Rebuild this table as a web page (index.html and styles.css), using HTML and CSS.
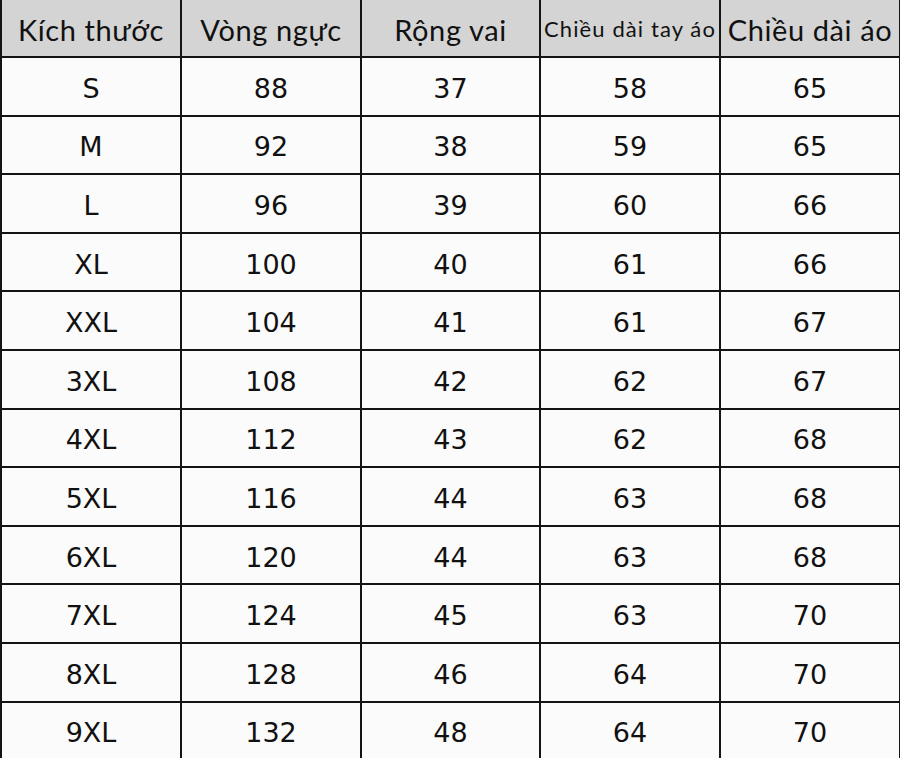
FILE: index.html
```html
<!DOCTYPE html>
<html lang="vi">
<head>
<meta charset="utf-8">
<title>Bảng size</title>
<link rel="stylesheet" href="styles.css">
</head>
<body>
<div class="size-table">
  <div class="cell head">Kích thước</div>
  <div class="cell head">Vòng ngực</div>
  <div class="cell head">Rộng vai</div>
  <div class="cell head small">Chiều dài tay áo</div>
  <div class="cell head">Chiều dài áo</div>

  <div class="cell">S</div><div class="cell">88</div><div class="cell">37</div><div class="cell">58</div><div class="cell">65</div>
  <div class="cell">M</div><div class="cell">92</div><div class="cell">38</div><div class="cell">59</div><div class="cell">65</div>
  <div class="cell">L</div><div class="cell">96</div><div class="cell">39</div><div class="cell">60</div><div class="cell">66</div>
  <div class="cell">XL</div><div class="cell">100</div><div class="cell">40</div><div class="cell">61</div><div class="cell">66</div>
  <div class="cell">XXL</div><div class="cell">104</div><div class="cell">41</div><div class="cell">61</div><div class="cell">67</div>
  <div class="cell">3XL</div><div class="cell">108</div><div class="cell">42</div><div class="cell">62</div><div class="cell">67</div>
  <div class="cell">4XL</div><div class="cell">112</div><div class="cell">43</div><div class="cell">62</div><div class="cell">68</div>
  <div class="cell">5XL</div><div class="cell">116</div><div class="cell">44</div><div class="cell">63</div><div class="cell">68</div>
  <div class="cell">6XL</div><div class="cell">120</div><div class="cell">44</div><div class="cell">63</div><div class="cell">68</div>
  <div class="cell">7XL</div><div class="cell">124</div><div class="cell">45</div><div class="cell">63</div><div class="cell">70</div>
  <div class="cell">8XL</div><div class="cell">128</div><div class="cell">46</div><div class="cell">64</div><div class="cell">70</div>
  <div class="cell">9XL</div><div class="cell">132</div><div class="cell">48</div><div class="cell">64</div><div class="cell">70</div>
</div>
</body>
</html>
```

FILE: styles.css
```css
html, body {
  margin: 0;
  padding: 0;
  background: #fbfbfb;
  overflow: hidden;
}

.size-table {
  width: 900px;
  box-sizing: border-box;
  display: grid;
  grid-template-columns: 178px 178px 177px 178px 178px;
  grid-template-rows: 56px;
  grid-auto-rows: 56.6px;
  gap: 2px;
  padding: 0 1px 0 2px;
  background: #141414;
}

.cell {
  background: #fbfbfb;
  color: #111;
  display: flex;
  align-items: center;
  justify-content: center;
  padding-top: 4px;
  box-sizing: border-box;
  font-family: "DejaVu Sans", sans-serif;
  font-size: 27px;
  white-space: nowrap;
}

.head {
  background: #d4d4d4;
  font-family: "Lato", "Open Sans", sans-serif;
  font-size: 29px;
  letter-spacing: 0.6px;
  padding-top: 2px;
}

.head.small {
  font-size: 22px;
  letter-spacing: 1.1px;
  padding-top: 0;
}
```
